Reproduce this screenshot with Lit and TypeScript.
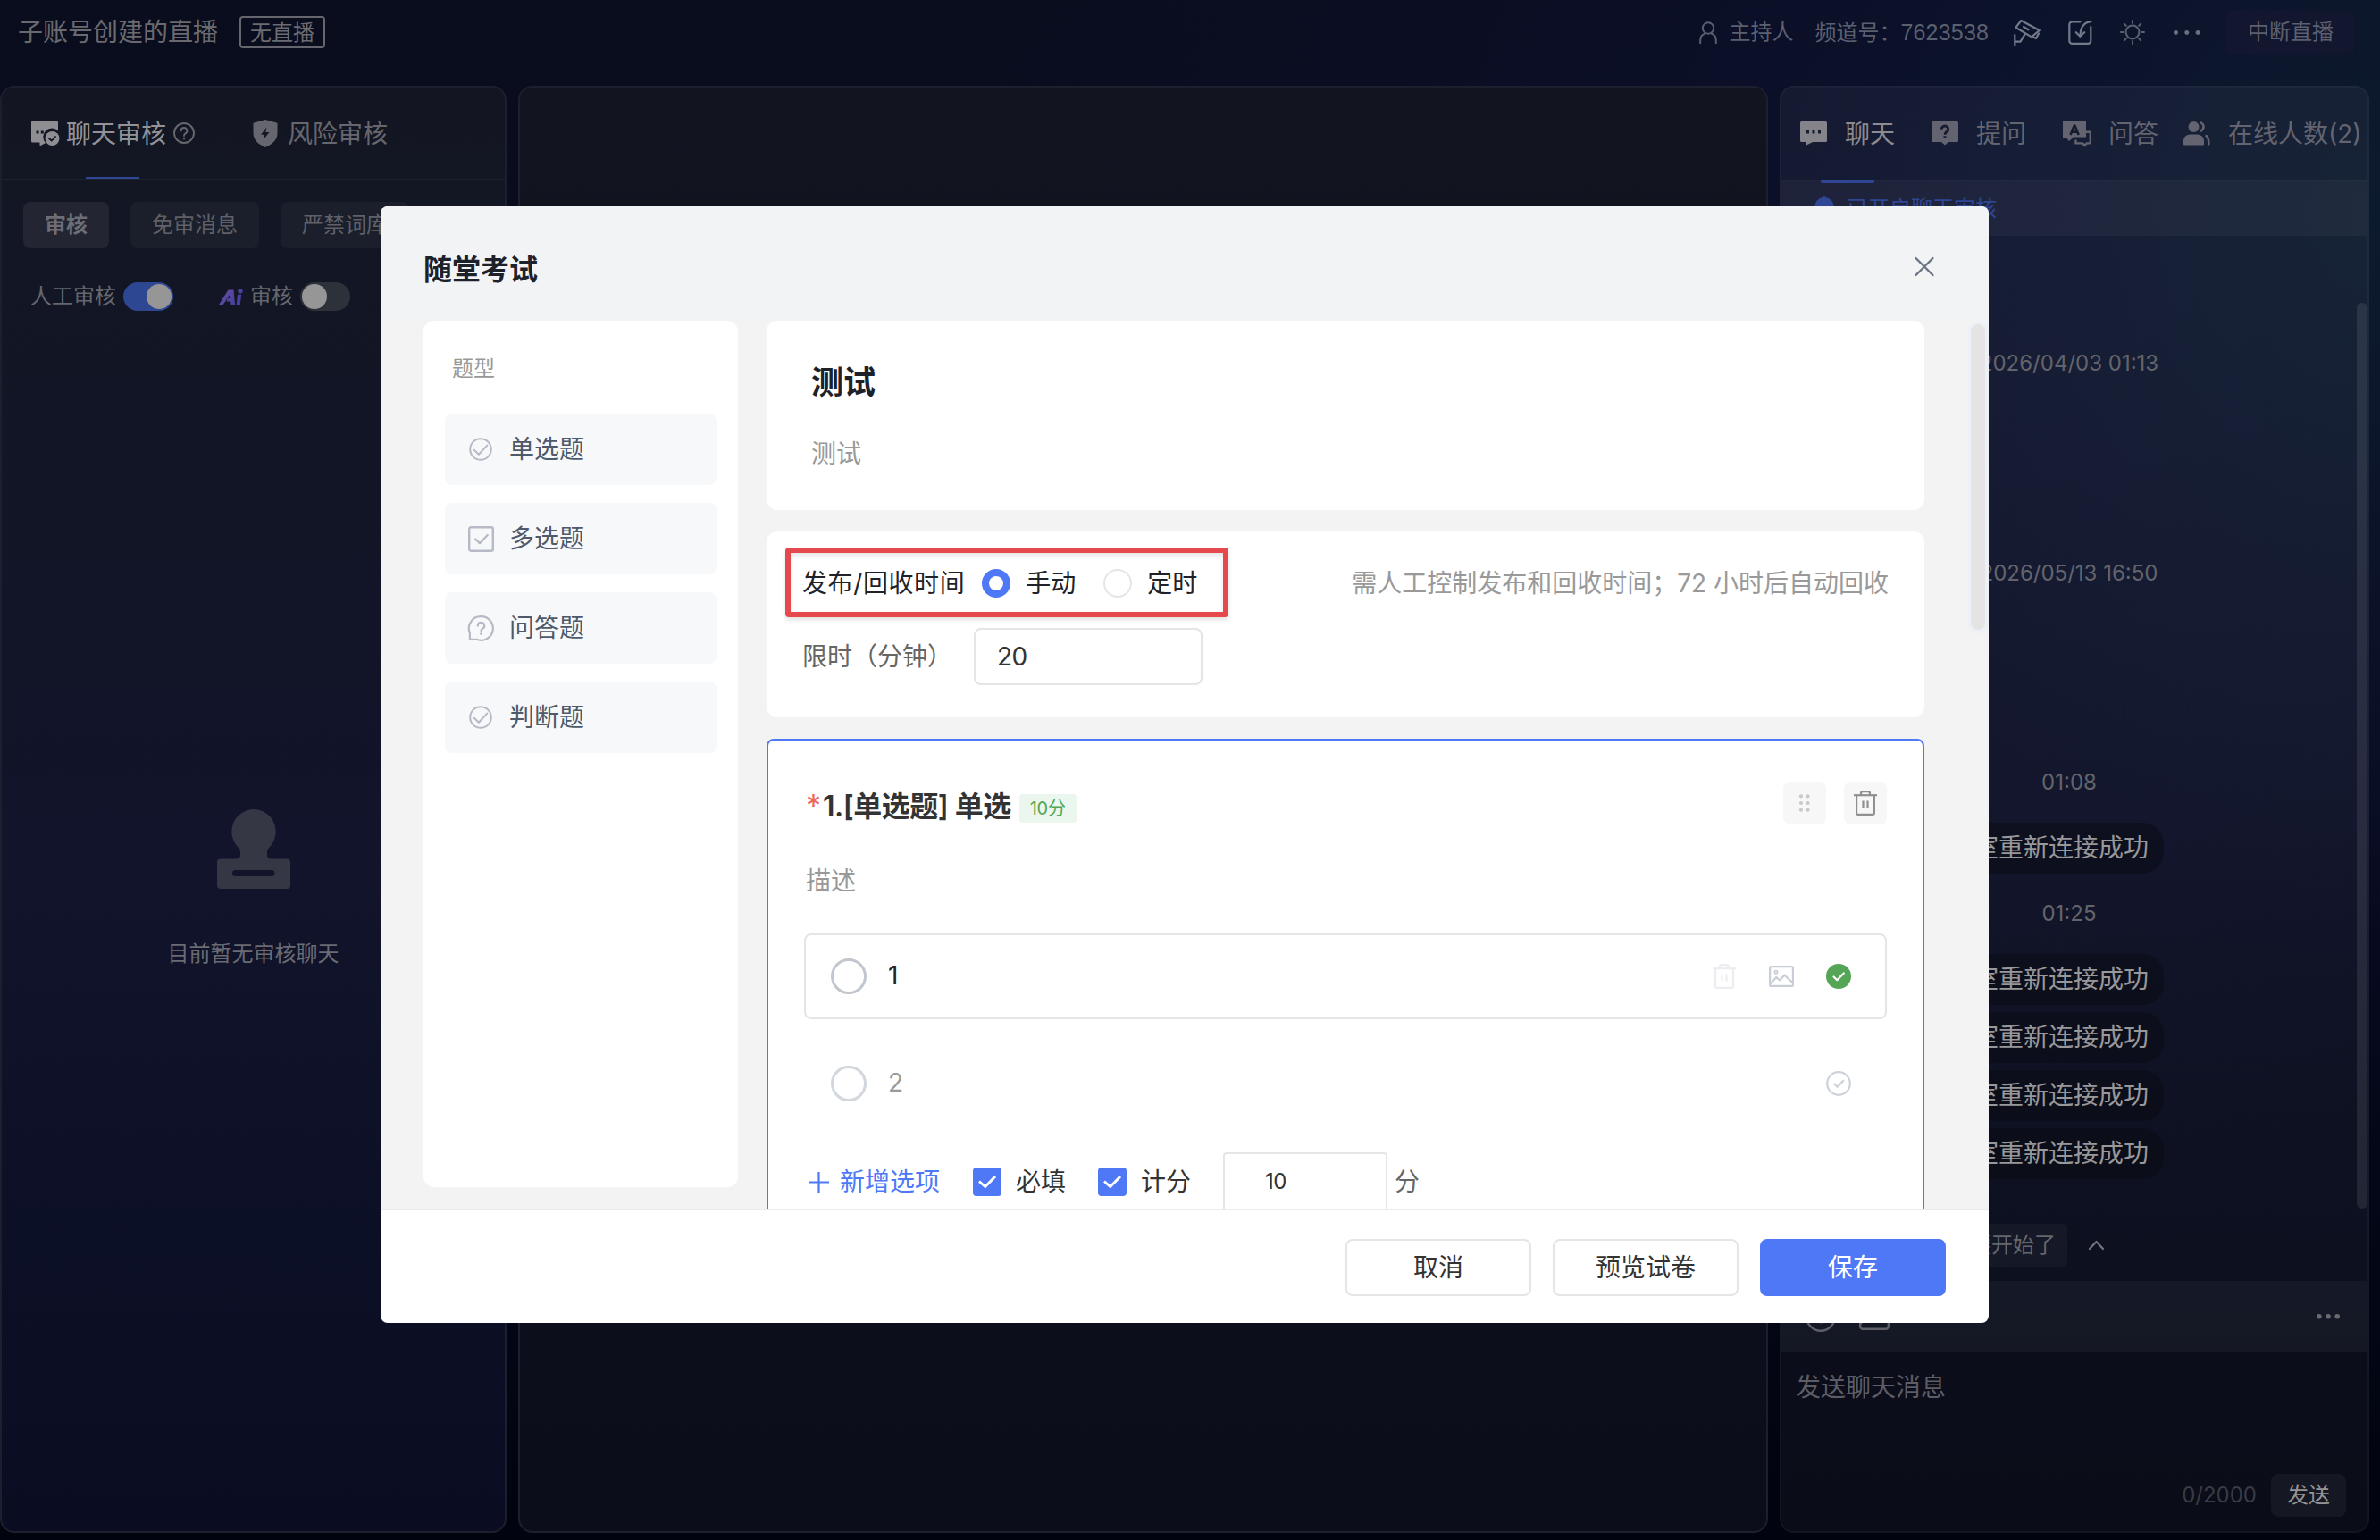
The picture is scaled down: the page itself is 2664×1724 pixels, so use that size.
import { LitElement, html, css, svg } from "lit";
import { customElement } from "lit/decorators.js";
import { classMap } from "lit/directives/class-map.js";

const base = css`
  :host {
    display: block;
    box-sizing: border-box;
    font-family: Inter, "Noto Sans CJK SC", sans-serif;
  }
  *,
  *::before,
  *::after {
    box-sizing: border-box;
  }
  svg {
    display: block;
    flex: none;
    overflow: visible;
  }
`;

const icon = (w: number, h: number, body: unknown) =>
  html`<svg width=${w} height=${h} viewBox="0 0 ${w} ${h}" fill="none" stroke-linecap="round" stroke-linejoin="round">${body}</svg>`;

const userIcon = icon(20, 25, svg`<g stroke="#5b6070" stroke-width="2"><circle cx="10" cy="7.5" r="6.2"/><path d="M1.2 24.3v-3.300a8.800 8 0 0 1 5.300-7.500M18.800 24.300v-3.300a8.800 8 0 0 0-5.300-7.500"/></g>`);
const cameraIcon = icon(32, 31, svg`<g stroke="#74798a" stroke-width="2.200"><path d="M9.300 2L29.800 13 21 20.400 3.300 9.800z"/><path d="M12 9l5.500 3.300"/><path d="M29 16.500l-3 5.500-4-2"/><path d="M2.300 18v12M2.500 25.600h6l5-8.200"/></g>`);
const exportIcon = icon(27, 27, svg`<g stroke="#74798a" stroke-width="2.200"><path d="M13.500 1.300H4.500a3.200 3.200 0 0 0-3.200 3.200v18.200a3.200 3.200 0 0 0 3.200 3.200h17.600a3.200 3.200 0 0 0 3.200-3.200V7"/><path d="M25.500 1.200C18 2 13.800 7 13.400 17"/><path d="M8.800 13.200l4.600 4.600 4.800-4.600"/></g>`);
const sunIcon = icon(28, 28, svg`<g stroke="#5b6070" stroke-width="2"><circle cx="14" cy="14" r="7.400"/><path d="M14 1v3M14 24v3M1 14h3M24 14h3M4.800 4.800l2.100 2.100M21.100 21.100l2.100 2.100M4.800 23.200l2.100-2.100M21.100 6.900l2.100-2.100"/></g>`);
const dots = (color: string, r: number, step: number) =>
  icon(step * 2 + r * 2, r * 2, svg`<g fill=${color}><circle cx=${r} cy=${r} r=${r}/><circle cx=${r + step} cy=${r} r=${r}/><circle cx=${r + step * 2} cy=${r} r=${r}/></g>`);

const chatCheckIcon = icon(32, 28, svg`
  <path fill="#8e8e92" d="M1.500 .5h27A1.500 1.500 0 0 1 30 2v9.500a9 9 0 0 0-14 13.500l-6.500 3.500v-4H1.500A1.500 1.500 0 0 1 0 23V2A1.500 1.500 0 0 1 1.500 .5z"/>
  <path fill="#131623" d="M5.500 11.500h3v3h-3zM10.800 11.500h3v3h-3z"/>
  <circle cx="23.500" cy="20" r="8" fill="#8e8e92"/>
  <path stroke="#131623" stroke-width="1.800" d="M20 20l2.700 2.600 4.300-4.600"/>`);
const helpIcon = icon(24, 24, svg`<g stroke="#66676e" stroke-width="1.900"><circle cx="12" cy="12" r="11"/><path d="M8.600 9.400a3.400 3.400 0 1 1 5 3c-1.200.7-1.600 1.300-1.600 2.600"/></g><circle cx="12" cy="18" r="1.300" fill="#66676e"/>`);
const shieldIcon = icon(28, 31, svg`<path fill="#66676e" d="M14 0l12.500 3.600a1 1 0 0 1 1 1V15c0 7.500-5.500 12.500-13.500 16C6 27.500.5 22.500.5 15V4.600a1 1 0 0 1 1-1z"/><path fill="#131623" d="M15.500 8.500L9 16.800h4.200L12 22l6.500-8h-4.200z"/>`);
const aiIcon = html`<svg width="27" height="19" viewBox="0 0 27 19"><defs><linearGradient id="ai" x1="0" y1="0" x2="1" y2="0.600"><stop offset="0" stop-color="#67509f"/><stop offset="1" stop-color="#453fa0"/></linearGradient></defs><path fill="url(#ai)" fill-rule="evenodd" d="M0 18L10.500 1.500h6L18 18h-4.500l-.2-3.600H8.500L9.800 11h3.200l-.3-4.800L4.800 18zM21 6.800h4.200L23.800 18h-4.200z"/><circle cx="24" cy="2.700" r="2.700" fill="#4a419f"/></svg>`;
const stampIcon = icon(82, 89, svg`<path fill="#353745" fill-rule="evenodd" d="M41 0a25 25 0 0 1 17.500 42.500Q56 44.500 56 48v3q0 4.500 4.500 4.500H78a4 4 0 0 1 4 4V85a4 4 0 0 1-4 4H4a4 4 0 0 1-4-4V59.500a4 4 0 0 1 4-4h17.500Q26 55.500 26 51v-3q0-3.500-2.500-5.500A25 25 0 0 1 41 0zM20.500 68a3.500 3.500 0 0 0 0 7h40.500a3.500 3.500 0 0 0 0-7z"/>`);

const bubbleIcon = icon(30, 27, svg`<path fill="#838389" d="M1.500 0h27A1.500 1.500 0 0 1 30 1.500v20a1.500 1.500 0 0 1-1.500 1.500H14l-7 3.500V23H1.500A1.500 1.500 0 0 1 0 21.500v-20A1.500 1.500 0 0 1 1.500 0z"/><path fill="#171b30" d="M7 10h3v3.500H7zM13.500 10h3v3.500h-3zM20 10h3v3.500h-3z"/>`);
const askIcon = icon(30, 27, svg`<path fill="#63646f" d="M1.500 0h27A1.500 1.500 0 0 1 30 1.500v20a1.500 1.500 0 0 1-1.500 1.500H19l-4 3.500-4-3.500H1.500A1.500 1.500 0 0 1 0 21.500v-20A1.500 1.500 0 0 1 1.500 0z"/><path stroke="#171b30" stroke-width="2.800" stroke-linecap="butt" d="M11.200 8.600a3.800 3.500 0 1 1 5.800 2.900c-1.500 1-2 1.600-2 3.200"/><path fill="#171b30" d="M13.500 16.200h3v2.800h-3z"/>`);
const answerIcon = icon(32, 29, svg`<path stroke="#63646f" stroke-width="2.400" stroke-linejoin="miter" stroke-linecap="butt" d="M25.500 12.800h5.300v12.600h-4l-2.300 2.500-2.300-2.500h-7.700v-4"/><path fill="#63646f" d="M1 0h24a1 1 0 0 1 1 1v17.500H12L7 23l-2.500-3H1a1 1 0 0 1-1-1V1a1 1 0 0 1 1-1z"/><path stroke="#171b30" stroke-width="2.600" stroke-linecap="butt" d="M8.500 16L12.800 5.500h.6L17.700 16M10 12.600h6.200"/>`);
const peopleIcon = icon(30, 27, svg`<g fill="#63646f"><circle cx="11.500" cy="6" r="6"/><path d="M0 25.500v-4a7.500 7 0 0 1 7.500-7h8a7.500 7 0 0 1 7.500 7v4a1 1 0 0 1-1 1H1a1 1 0 0 1-1-1z"/></g><g stroke="#63646f" stroke-width="2.500"><path d="M19.800 1.500c3.700 2.500 3.700 6.500 0 9"/><path d="M25.500 16c2.300 2 3 5 2.900 9.300"/></g>`);
const bellIcon = icon(24, 30, svg`<path fill="#2f4694" d="M12 0a2 2 0 0 1 2 2 10 10 0 0 1 8.500 10v9l1.500 3H0l1.500-3v-9A10 10 0 0 1 10 2a2 2 0 0 1 2-2z"/>`);

const checkCircle = (size: number, stroke: string) =>
  icon(size, size, svg`<g stroke=${stroke} stroke-width="2"><circle cx=${size / 2} cy=${size / 2} r=${size / 2 - 1.200}/><path d="M${size * 0.22} ${size * 0.53}l${size * 0.2} ${size * 0.19} ${size * 0.36}-${size * 0.39}"/></g>`);
const smallCheckCircle = icon(28, 28, svg`<g stroke="#cdd1d9" stroke-width="2.200"><circle cx="14" cy="14" r="12.800"/><path d="M9.200 14.500l3.400 3.300 6.600-6.800"/></g>`);
const doneIcon = icon(28, 28, svg`<circle cx="14" cy="14" r="14" fill="#54a656"/><path stroke="#fff" stroke-width="2.200" d="M8.500 14.500l3.800 3.700 7.500-7.800"/>`);
const boxIcon = icon(29, 29, svg`<g stroke="#b6bac6" stroke-width="2.400"><rect x="1.200" y="1.200" width="26.600" height="26.600" rx="2"/><path d="M8.200 14.600l4.800 4.600 8.700-9.200"/></g>`);
const questionIcon = icon(29, 29, svg`<g stroke="#b6bac6" stroke-width="2.200"><path d="M14.500 1.200a13.300 13.300 0 1 1-5 25.600H1.900v-7A13.300 13.300 0 0 1 14.500 1.200z"/><path d="M10.800 11.600a3.700 3.700 0 1 1 5.400 3.200c-1.200.7-1.700 1.300-1.700 2.800"/></g><circle cx="14.500" cy="20.600" r="1.400" fill="#b6bac6"/>`);
const trashIcon = (color: string) =>
  icon(26, 28, svg`<g stroke=${color} stroke-width="2.200" stroke-linecap="butt"><path d="M0 5.200h26"/><path d="M8 5V3.200a2 2 0 0 1 2-2h6a2 2 0 0 1 2 2V5"/><path d="M3.100 5.500v20a1.300 1.300 0 0 0 1.300 1.300h17.200a1.300 1.300 0 0 0 1.300-1.300v-20"/><path d="M10.500 11.500v8M15.500 11.500v8"/></g>`);
const pictureIcon = icon(28, 24, svg`<g stroke="#c9cdd6" stroke-width="2.200"><rect x="1.100" y="1.100" width="25.800" height="21.800" rx="1.500"/><circle cx="8" cy="7.300" r="1.600" stroke-width="1.800"/><path d="M2 20l6.300-7 4 3.500 5-6 9 8.500"/></g>`);
const gripIcon = icon(14, 20, svg`<g fill="#c9c9c9">${[3, 10.500].flatMap((x) => [2.300, 10, 17.700].map((y) => svg`<circle cx=${x} cy=${y} r="2.100"/>`))}</g>`);
const closeIcon = icon(22, 21, svg`<path stroke="#6b7684" stroke-width="2.400" d="M1.500 1l19 19M20.500 1l-19 19"/>`);
const plusIcon = icon(23, 23, svg`<path stroke="#4e78f5" stroke-width="2.200" stroke-linecap="butt" d="M0 11.500h23M11.500 0v23"/>`);
const tickIcon = icon(20, 16, svg`<path stroke="#fff" stroke-width="3" stroke-linecap="butt" stroke-linejoin="miter" d="M1 7.500l6.800 6L19 2"/>`);
const chevronUp = icon(17, 10, svg`<path stroke="#74757c" stroke-width="2.200" d="M1 9l7.500-8L16 9"/>`);
const smileIcon = icon(34, 34, svg`<g stroke="#5f6068" stroke-width="2.400"><circle cx="17" cy="17" r="15.800"/><path d="M10.500 19.500a7 6 0 0 0 13 0"/></g>`);
const photoIcon = icon(34, 30, svg`<g stroke="#5f6068" stroke-width="2.400"><rect x="1.200" y="1.200" width="31.600" height="27.600" rx="3"/><path d="M2 22l9-8 5 4 6-6 10.500 9"/></g>`);

@customElement("live-header")
class LiveHeader extends LitElement {
  static styles = [
    base,
    css`
      :host {
        height: 96px;
        padding: 12px 28px 0 20px;
      }
      .bar {
        display: flex;
        align-items: center;
        height: 48px;
        font-size: 24px;
        line-height: 36px;
        color: #5b6070;
      }
      .title {
        font-size: 28px;
        color: #696a70;
      }
      .status {
        margin-left: 24px;
        height: 36px;
        padding: 0 10px;
        border: 2px solid #66676e;
        border-radius: 4px;
        line-height: 34px;
        color: #6b6c73;
      }
      .space {
        flex: 1;
      }
      .host {
        margin-left: 13px;
      }
      .channel {
        margin-left: 24px;
        width: 222px;
        white-space: nowrap;
      }
      .number {
        font-family: "Liberation Sans", sans-serif;
        font-size: 25px;
        letter-spacing: 0.2px;
      }
      .export {
        margin-left: 30px;
      }
      .sun {
        margin-left: 31px;
      }
      .more {
        margin-left: 32px;
      }
      .stop {
        margin-left: 29px;
        width: 144px;
        height: 48px;
        border-radius: 6px;
        background: #12162e;
        line-height: 48px;
        text-align: center;
      }
    `,
  ];
  render() {
    return html`<div class="bar">
      <span class="title">子账号创建的直播</span>
      <span class="status">无直播</span>
      <span class="space"></span>
      ${userIcon}
      <span class="host">主持人</span>
      <span class="channel">频道号：<span class="number">7623538</span></span>
      ${cameraIcon}
      <span class="export">${exportIcon}</span>
      <span class="sun">${sunIcon}</span>
      <span class="more">${dots("#6c7182", 2.5, 12.3)}</span>
      <span class="stop">中断直播</span>
    </div>`;
  }
}

@customElement("review-panel")
class ReviewPanel extends LitElement {
  static styles = [
    base,
    css`
      :host {
        border: 2px solid #1c1f2e;
        border-radius: 16px;
        background: linear-gradient(180deg, #131622 0%, #121527 35%, #11142b 55%, #0c1026 80%, #0a0d22 100%);
        overflow: hidden;
      }
      .tabs {
        display: flex;
        align-items: center;
        height: 104px;
        padding-left: 33px;
        border-bottom: 2px solid #1f2230;
        position: relative;
        font-size: 28px;
        line-height: 40px;
        color: #66676e;
      }
      .current {
        margin: 0 8px 0 7px;
        padding-top: 2px;
        color: #939397;
      }
      .other {
        padding-top: 2px;
      }
      .line {
        position: absolute;
        left: 94px;
        bottom: 0;
        width: 60px;
        height: 2px;
        background: #2e4793;
      }
      .shield {
        margin: 0 11px 0 65px;
      }
      .filters {
        display: flex;
        gap: 24px;
        padding: 24px 0 0 24px;
      }
      .filter {
        flex: none;
        height: 52px;
        padding: 0 24px;
        border-radius: 8px;
        background: #1b1e2b;
        font-size: 24px;
        line-height: 52px;
        color: #5f6068;
      }
      .on {
        background: #232632;
        color: #6d6e75;
        font-weight: 600;
      }
      .switches {
        display: flex;
        align-items: center;
        height: 32px;
        margin-top: 38px;
        padding-left: 32px;
        font-size: 24px;
        line-height: 34px;
        color: #66676e;
      }
      .switch {
        display: flex;
        width: 56px;
        height: 32px;
        margin-left: 8px;
        padding: 2px;
        border-radius: 16px;
        background: #2d3139;
      }
      .switch::after {
        content: "";
        width: 28px;
        height: 28px;
        border-radius: 50%;
        background: #969696;
      }
      .active {
        justify-content: flex-end;
        background: #2e4793;
      }
      .ai {
        margin: 0 8px 0 51px;
      }
      .empty {
        display: flex;
        flex-direction: column;
        align-items: center;
        gap: 55px;
        margin-top: 558px;
        font-size: 24px;
        line-height: 36px;
        color: #6a6b73;
      }
    `,
  ];
  render() {
    return html`
      <div class="tabs">
        ${chatCheckIcon}<span class="current">聊天审核</span>${helpIcon}
        <span class="shield">${shieldIcon}</span><span class="other">风险审核</span>
        <span class="line"></span>
      </div>
      <div class="filters">
        ${["审核", "免审消息", "严禁词库"].map((t, i) => html`<span class=${classMap({ filter: true, on: i === 0 })}>${t}</span>`)}
      </div>
      <div class="switches">
        人工审核<span class="switch active"></span>
        <span class="ai">${aiIcon}</span>审核<span class="switch"></span>
      </div>
      <div class="empty">${stampIcon}<span>目前暂无审核聊天</span></div>
    `;
  }
}

@customElement("chat-panel")
class ChatPanel extends LitElement {
  static styles = [
    base,
    css`
      :host {
        display: flex;
        flex-direction: column;
        position: relative;
        border: 2px solid rgba(255, 255, 255, 0.035);
        border-radius: 16px;
        background: rgba(255, 255, 255, 0.045);
        overflow: hidden;
      }
      .tabs {
        display: flex;
        align-items: center;
        height: 103px;
        flex: none;
        padding: 0 0 0 21px;
        font-size: 28px;
        line-height: 42px;
        color: #63646f;
        white-space: nowrap;
      }
      .tab {
        display: flex;
        align-items: center;
        gap: 20px;
        margin-right: 41px;
      }
      .answer {
        gap: 19px;
        margin-right: 28px;
      }
      .current {
        color: #8b8b90;
      }
      .line {
        position: absolute;
        left: 44px;
        top: 103px;
        width: 60px;
        height: 4px;
        border-radius: 2px;
        background: #2f4694;
      }
      .notice {
        display: flex;
        align-items: center;
        gap: 13px;
        flex: none;
        height: 63px;
        padding-left: 36px;
        border-top: 2px solid rgba(255, 255, 255, 0.02);
        background: rgba(255, 255, 255, 0.04);
        font-size: 24px;
        line-height: 36px;
        color: #2f4694;
      }
      .log {
        display: flex;
        flex-direction: column;
        height: 1056px;
        flex: none;
        font-size: 24px;
        line-height: 34px;
        color: #63646b;
      }
      .time {
        margin-right: 12px;
        text-align: center;
      }
      .t0 {
        margin-top: 126px;
      }
      .t1 {
        margin-top: 201px;
      }
      .t2 {
        margin-top: 200px;
      }
      .t3 {
        margin-top: 28px;
      }
      .bubbles {
        display: flex;
        flex-direction: column;
        align-items: flex-end;
        gap: 8px;
        margin: 28px 228px 0 0;
      }
      .bubble {
        height: 57px;
        padding: 0 17px;
        border-radius: 24px;
        background: rgba(8, 10, 18, 0.5);
        font-size: 28px;
        line-height: 57px;
        color: #98989a;
      }
      .quick {
        display: flex;
        align-items: center;
        gap: 24px;
        flex: none;
        height: 48px;
        margin-top: 50px;
        padding-left: 197px;
      }
      .phrase {
        padding: 0 13px 0 14px;
        border-radius: 6px;
        background: rgba(255, 255, 255, 0.035);
        font-size: 24px;
        line-height: 48px;
        color: #66676c;
      }
      .tools {
        display: flex;
        align-items: center;
        flex: none;
        height: 80px;
        margin-top: 16px;
        padding: 0 31px 0 27px;
        background: rgba(255, 255, 255, 0.035);
      }
      .photo {
        margin: 0 auto 0 26px;
      }
      .compose {
        display: flex;
        flex-direction: column;
        justify-content: space-between;
        flex: 1;
        padding: 19px 24px 16px 16px;
        background: rgba(8, 9, 18, 0.25);
        font-size: 28px;
        line-height: 40px;
        color: #5c5d66;
      }
      .send {
        display: flex;
        justify-content: flex-end;
        align-items: center;
        gap: 16px;
        font-size: 24px;
        color: #393b45;
      }
      .button {
        width: 84px;
        border-radius: 8px;
        background: #151722;
        line-height: 48px;
        text-align: center;
        color: #959597;
      }
      .scroll {
        position: absolute;
        right: 0;
        top: 241px;
        width: 12px;
        height: 1014px;
        border-radius: 6px;
        background: rgba(255, 255, 255, 0.09);
      }
    `,
  ];
  render() {
    const bubble = html`<span class="bubble">室重新连接成功</span>`;
    return html`
      <div class="tabs">
        <span class="tab current">${bubbleIcon}聊天</span>
        <span class="tab">${askIcon}提问</span>
        <span class="tab answer">${answerIcon}问答</span>
        <span class="tab">${peopleIcon}在线人数(2)</span>
      </div>
      <span class="line"></span>
      <div class="notice">${bellIcon}已开启聊天审核</div>
      <div class="log">
        <div class="time t0">2026/04/03 01:13</div>
        <div class="time t1">2026/05/13 16:50</div>
        <div class="time t2">01:08</div>
        <div class="bubbles">${bubble}</div>
        <div class="time t3">01:25</div>
        <div class="bubbles">${[0, 1, 2, 3].map(() => bubble)}</div>
      </div>
      <div class="quick"><span class="phrase">要开始了</span>${chevronUp}</div>
      <div class="tools">${smileIcon}<span class="photo">${photoIcon}</span>${dots("#6a6b71", 2.8, 10.2)}</div>
      <div class="compose">
        <span>发送聊天消息</span>
        <div class="send"><span>0/2000</span><span class="button">发送</span></div>
      </div>
      <span class="scroll"></span>
    `;
  }
}

@customElement("exam-dialog")
class ExamDialog extends LitElement {
  static styles = [
    base,
    css`
      :host {
        display: flex;
        flex-direction: column;
        width: 1800px;
        height: 1250px;
        border-radius: 8px;
        background: #fff;
        overflow: hidden;
        font-size: 28px;
        line-height: 40px;
        color: #333;
      }
      .head {
        display: flex;
        justify-content: space-between;
        align-items: center;
        flex: none;
        height: 128px;
        padding: 14px 61px 0 48px;
        background: #f1f3f5;
        font-size: 32px;
        font-weight: 600;
        color: #1d2129;
      }
      .close {
        margin-top: -7px;
      }
      .body {
        display: flex;
        align-items: flex-start;
        gap: 32px;
        flex: none;
        height: 996px;
        padding: 0 72px 0 48px;
        border-bottom: 1px solid #ebebeb;
        background: #f3f3f3;
        overflow: hidden;
        position: relative;
      }
      .types {
        display: flex;
        flex-direction: column;
        gap: 20px;
        width: 352px;
        height: 970px;
        padding: 36px 24px;
        border-radius: 12px;
        background: #fff;
      }
      .label {
        margin: 0 0 12px 8px;
        height: 36px;
        font-size: 24px;
        line-height: 36px;
        color: #999;
      }
      .type {
        display: flex;
        align-items: center;
        gap: 17px;
        flex: none;
        height: 80px;
        padding-left: 25px;
        border-radius: 8px;
        background: #f7f8fa;
        color: #4e5969;
      }
      .glyph {
        display: flex;
        justify-content: center;
        width: 30px;
      }
      .paper {
        display: flex;
        flex-direction: column;
        gap: 24px;
        width: 1296px;
      }
      .card {
        border-radius: 12px;
        background: #fff;
      }
      .intro {
        height: 212px;
        padding: 43px 50px;
        color: #999;
      }
      .name {
        margin-bottom: 34px;
        font-size: 36px;
        line-height: 52px;
        font-weight: 600;
        color: #1d2129;
      }
      .settings {
        position: relative;
        height: 208px;
        padding: 38px 40px 0;
      }
      .row {
        display: flex;
        align-items: center;
        height: 40px;
        line-height: 42px;
        color: #1f2329;
      }
      .subject {
        letter-spacing: 0.6px;
      }
      .radio {
        width: 32px;
        height: 32px;
        border: 2px solid #e5e5e5;
        border-radius: 50%;
      }
      .checked {
        border: 8px solid #4e78f5;
      }
      .row .checked {
        margin: 0 17px 0 19px;
      }
      .manual {
        margin-right: 31px;
      }
      .timed {
        margin-left: 17px;
      }
      .hint {
        margin-left: auto;
        color: #999;
      }
      .frame {
        position: absolute;
        left: 21px;
        top: 18px;
        width: 496px;
        height: 78px;
        border: 6px solid #e5494d;
        border-radius: 4px;
        box-shadow: 0 3px 5px rgba(0, 0, 0, 0.12), inset 0 3px 5px rgba(0, 0, 0, 0.1);
      }
      .limit {
        display: flex;
        align-items: center;
        margin-top: 30px;
        line-height: 42px;
        color: #666;
      }
      .caption {
        width: 192px;
      }
      .input {
        width: 256px;
        height: 64px;
        padding-left: 24px;
        border: 2px solid #e5e5e5;
        border-radius: 8px;
        line-height: 60px;
        letter-spacing: -0.5px;
        color: #333;
      }
      .question {
        height: 640px;
        padding: 46px 40px 0;
        border: 2px solid #4e78f5;
        border-radius: 8px;
      }
      .top {
        display: flex;
        align-items: center;
        height: 48px;
      }
      .star {
        color: #f0655a;
        font-size: 34px;
        line-height: 40px;
        width: 19px;
        margin-left: 2px;
        padding-top: 6px;
      }
      .stem {
        padding-top: 7px;
        font-size: 32px;
        font-weight: 600;
        letter-spacing: -0.5px;
        white-space: pre;
      }
      .score {
        margin: 12px auto 0 9px;
        height: 32px;
        padding: 0 12px;
        border-radius: 4px;
        background: #ebf6ee;
        font-size: 20px;
        line-height: 33px;
        letter-spacing: -0.2px;
        color: #54a656;
      }
      .square {
        display: flex;
        align-items: center;
        justify-content: center;
        width: 48px;
        height: 48px;
        margin-left: 20px;
        border-radius: 8px;
        background: #f7f7f7;
      }
      .desc {
        margin: 43px 0 39px 2px;
        color: #999;
      }
      .option {
        display: flex;
        align-items: center;
        height: 96px;
        padding: 0 38px 0 28px;
        border: 2px solid transparent;
        border-radius: 8px;
        color: #1f2329;
      }
      .selected {
        border-color: #e5e5e5;
      }
      .ring {
        width: 40px;
        height: 40px;
        border: 3px solid #c2c7cf;
        border-radius: 50%;
      }
      .idle {
        margin-top: 24px;
        color: #999;
      }
      .idle .ring {
        border-color: #d2d6dd;
      }
      .value {
        margin: -3px auto 0 24px;
      }
      .bin {
        margin-right: 37px;
      }
      .pic {
        margin-right: 36px;
      }
      .actions {
        display: flex;
        align-items: center;
        height: 66px;
        margin-top: 29px;
        padding-left: 5px;
      }
      .add {
        margin: 0 37px 0 12px;
        color: #4e78f5;
      }
      .check {
        display: flex;
        align-items: center;
        justify-content: center;
        width: 32px;
        height: 32px;
        margin-right: 16px;
        border-radius: 4px;
        background: #4e78f5;
      }
      .required {
        margin-right: 36px;
      }
      .points {
        width: 184px;
        height: 68px;
        margin: 2px 8px 0 36px;
        padding-left: 45px;
        border: 2px solid #e5e5e5;
        border-radius: 4px;
        font-size: 24px;
        line-height: 62px;
        letter-spacing: -0.5px;
      }
      .unit {
        color: #666;
      }
      .thumb {
        position: absolute;
        left: 1777px;
        top: 0;
        width: 23px;
        height: 350px;
        border: 4px solid #edf0f6;
        border-width: 4px 4px 4px 3px;
        border-radius: 12px;
        background: #e4e4e4;
      }
      .foot {
        display: flex;
        justify-content: flex-end;
        align-items: center;
        gap: 24px;
        flex: 1;
        padding: 1px 48px 0 0;
      }
      .button {
        width: 208px;
        height: 64px;
        border: 2px solid #e5e5e5;
        border-radius: 8px;
        line-height: 61px;
        text-align: center;
      }
      .primary {
        border-color: #4e78f5;
        background: #4e78f5;
        color: #fff;
      }
    `,
  ];
  render() {
    const types = [
      ["单选题", checkCircle(26, "#b6bac6")],
      ["多选题", boxIcon],
      ["问答题", questionIcon],
      ["判断题", checkCircle(26, "#b6bac6")],
    ];
    const option = (value: string, selected: boolean) => html`
      <div class=${classMap({ option: true, selected, idle: !selected })}>
        <span class="ring"></span><span class="value">${value}</span>
        ${selected ? html`<span class="bin">${trashIcon("#ebedf1")}</span><span class="pic">${pictureIcon}</span>${doneIcon}` : smallCheckCircle}
      </div>
    `;
    return html`
      <div class="head"><span>随堂考试</span><span class="close">${closeIcon}</span></div>
      <div class="body">
        <div class="types">
          <div class="label">题型</div>
          ${types.map(([t, g]) => html`<div class="type"><span class="glyph">${g}</span>${t}</div>`)}
        </div>
        <div class="paper">
          <div class="card intro"><div class="name">测试</div>测试</div>
          <div class="card settings">
            <div class="row">
              <span class="subject">发布/回收时间</span><span class="radio checked"></span><span class="manual">手动</span>
              <span class="radio"></span><span class="timed">定时</span>
              <span class="hint">需人工控制发布和回收时间；72 小时后自动回收</span>
            </div>
            <div class="limit"><span class="caption">限时（分钟）</span><span class="input">20</span></div>
            <span class="frame"></span>
          </div>
          <div class="card question">
            <div class="top">
              <span class="star">*</span><span class="stem">1.[单选题] 单选</span><span class="score">10分</span>
              <span class="square">${gripIcon}</span><span class="square">${trashIcon("#909090")}</span>
            </div>
            <div class="desc">描述</div>
            ${option("1", true)} ${option("2", false)}
            <div class="actions">
              ${plusIcon}<span class="add">新增选项</span>
              <span class="check">${tickIcon}</span><span class="required">必填</span>
              <span class="check">${tickIcon}</span><span>计分</span>
              <span class="points">10</span><span class="unit">分</span>
            </div>
          </div>
        </div>
        <span class="thumb"></span>
      </div>
      <div class="foot">
        <span class="button">取消</span><span class="button">预览试卷</span><span class="button primary">保存</span>
      </div>
    `;
  }
}

@customElement("app-root")
class AppRoot extends LitElement {
  static styles = [
    base,
    css`
      :host {
        position: relative;
        width: 2664px;
        height: 1724px;
        overflow: hidden;
        background:
          radial-gradient(ellipse 700px 800px at 2664px 240px, rgba(13, 30, 48, 0.75) 0%, rgba(13, 26, 48, 0.35) 50%, rgba(10, 20, 40, 0) 100%),
          radial-gradient(ellipse 1300px 1100px at 2300px 200px, rgba(12, 17, 46, 0.9) 0%, rgba(11, 15, 40, 0.6) 50%, rgba(8, 12, 32, 0) 100%),
          linear-gradient(180deg, #0a0d1d 0%, #070a20 50%, #01040f 100%);
      }
      .main {
        display: flex;
        gap: 13px;
        height: 1620px;
      }
      .left {
        width: 567px;
      }
      .stage {
        width: 1399px;
        border: 2px solid #1c1f2e;
        border-radius: 16px;
        background: linear-gradient(180deg, #121420 0%, #0b0d1b 100%);
      }
      .right {
        width: 660px;
      }
      .dialog {
        position: absolute;
        left: 426px;
        top: 231px;
      }
    `,
  ];
  render() {
    return html`
      <live-header></live-header>
      <div class="main">
        <review-panel class="left"></review-panel>
        <div class="stage"></div>
        <chat-panel class="right"></chat-panel>
      </div>
      <exam-dialog class="dialog"></exam-dialog>
    `;
  }
}
